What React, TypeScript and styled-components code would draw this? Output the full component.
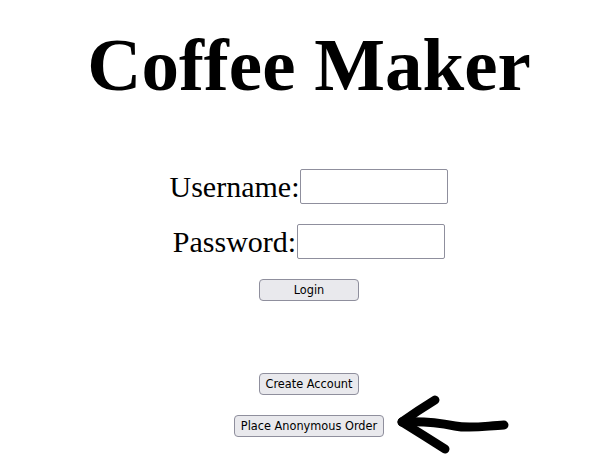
import React from "react";
import styled, { createGlobalStyle } from "styled-components";

const Global = createGlobalStyle`
  html, body { background: #ffffff; }
  body { margin: 8px; font-family: "Liberation Serif", "Times New Roman", serif; color: #000; }
`;

const Page = styled.div`
  position: relative;
  box-sizing: border-box;
  min-height: calc(100vh - 16px);
  display: flex;
  flex-direction: column;
  align-items: center;
  padding-left: 9px;
`;

const Title = styled.h1`
  margin: 14px 0 0;
  font-family: "Liberation Serif", "Times New Roman", serif;
  font-weight: bold;
  font-size: 75px;
  line-height: normal;
`;

const Form = styled.form`
  display: flex;
  flex-direction: column;
  align-items: center;
  margin-top: 61px;
`;

const Row = styled.div`
  display: flex;
  align-items: center;
  margin-bottom: 20px;
`;

const Label = styled.label`
  font-family: "Liberation Serif", "Times New Roman", serif;
  font-size: 30px;
  line-height: 35px;
`;

const TextInput = styled.input`
  box-sizing: border-box;
  width: 148px;
  height: 35px;
  margin: 0 0 0 1px;
  border: 1px solid #8f8f9d;
  border-radius: 2px;
  background: #fff;
  padding: 2px 4px;
`;

const Button = styled.button<{ $width?: number }>`
  box-sizing: border-box;
  ${(p) => (p.$width ? `width: ${p.$width}px;` : "")}
  height: 22px;
  padding: 0 6px;
  border: 1px solid #8f8f9d;
  border-radius: 4px;
  background: #e9e9ed;
  color: #000;
  font-family: "DejaVu Sans Condensed", "DejaVu Sans", sans-serif;
  font-stretch: condensed;
  font-size: 12.6px;
  line-height: 20px;
  cursor: pointer;
`;

const Actions = styled.div`
  display: flex;
  flex-direction: column;
  align-items: center;
  gap: 20px;
  margin-top: 72px;
`;

const Arrow = styled.svg`
  position: absolute;
  left: 387px;
  top: 382px;
  width: 120px;
  height: 70px;
  overflow: visible;
`;

export default function App() {
  return (
    <>
      <Global />
      <Page>
        <Title>Coffee Maker</Title>
        <Form onSubmit={(e) => e.preventDefault()}>
          <Row>
            <Label htmlFor="username">Username:</Label>
            <TextInput id="username" type="text" />
          </Row>
          <Row>
            <Label htmlFor="password">Password:</Label>
            <TextInput id="password" type="password" />
          </Row>
          <Button type="submit" $width={100}>Login</Button>
        </Form>
        <Actions>
          <Button type="button">Create Account</Button>
          <Button type="button">Place Anonymous Order</Button>
        </Actions>
        <Arrow viewBox="0 0 120 70" fill="none" stroke="#000" strokeWidth="9" strokeLinecap="round" strokeLinejoin="round">
          <path d="M40 10 Q22 21 7 32" />
          <path d="M7 32 Q28 45 50 59" />
          <path d="M9 32 C28 31 45 33 60 36 S90 36 109 35" />
        </Arrow>
      </Page>
    </>
  );
}
